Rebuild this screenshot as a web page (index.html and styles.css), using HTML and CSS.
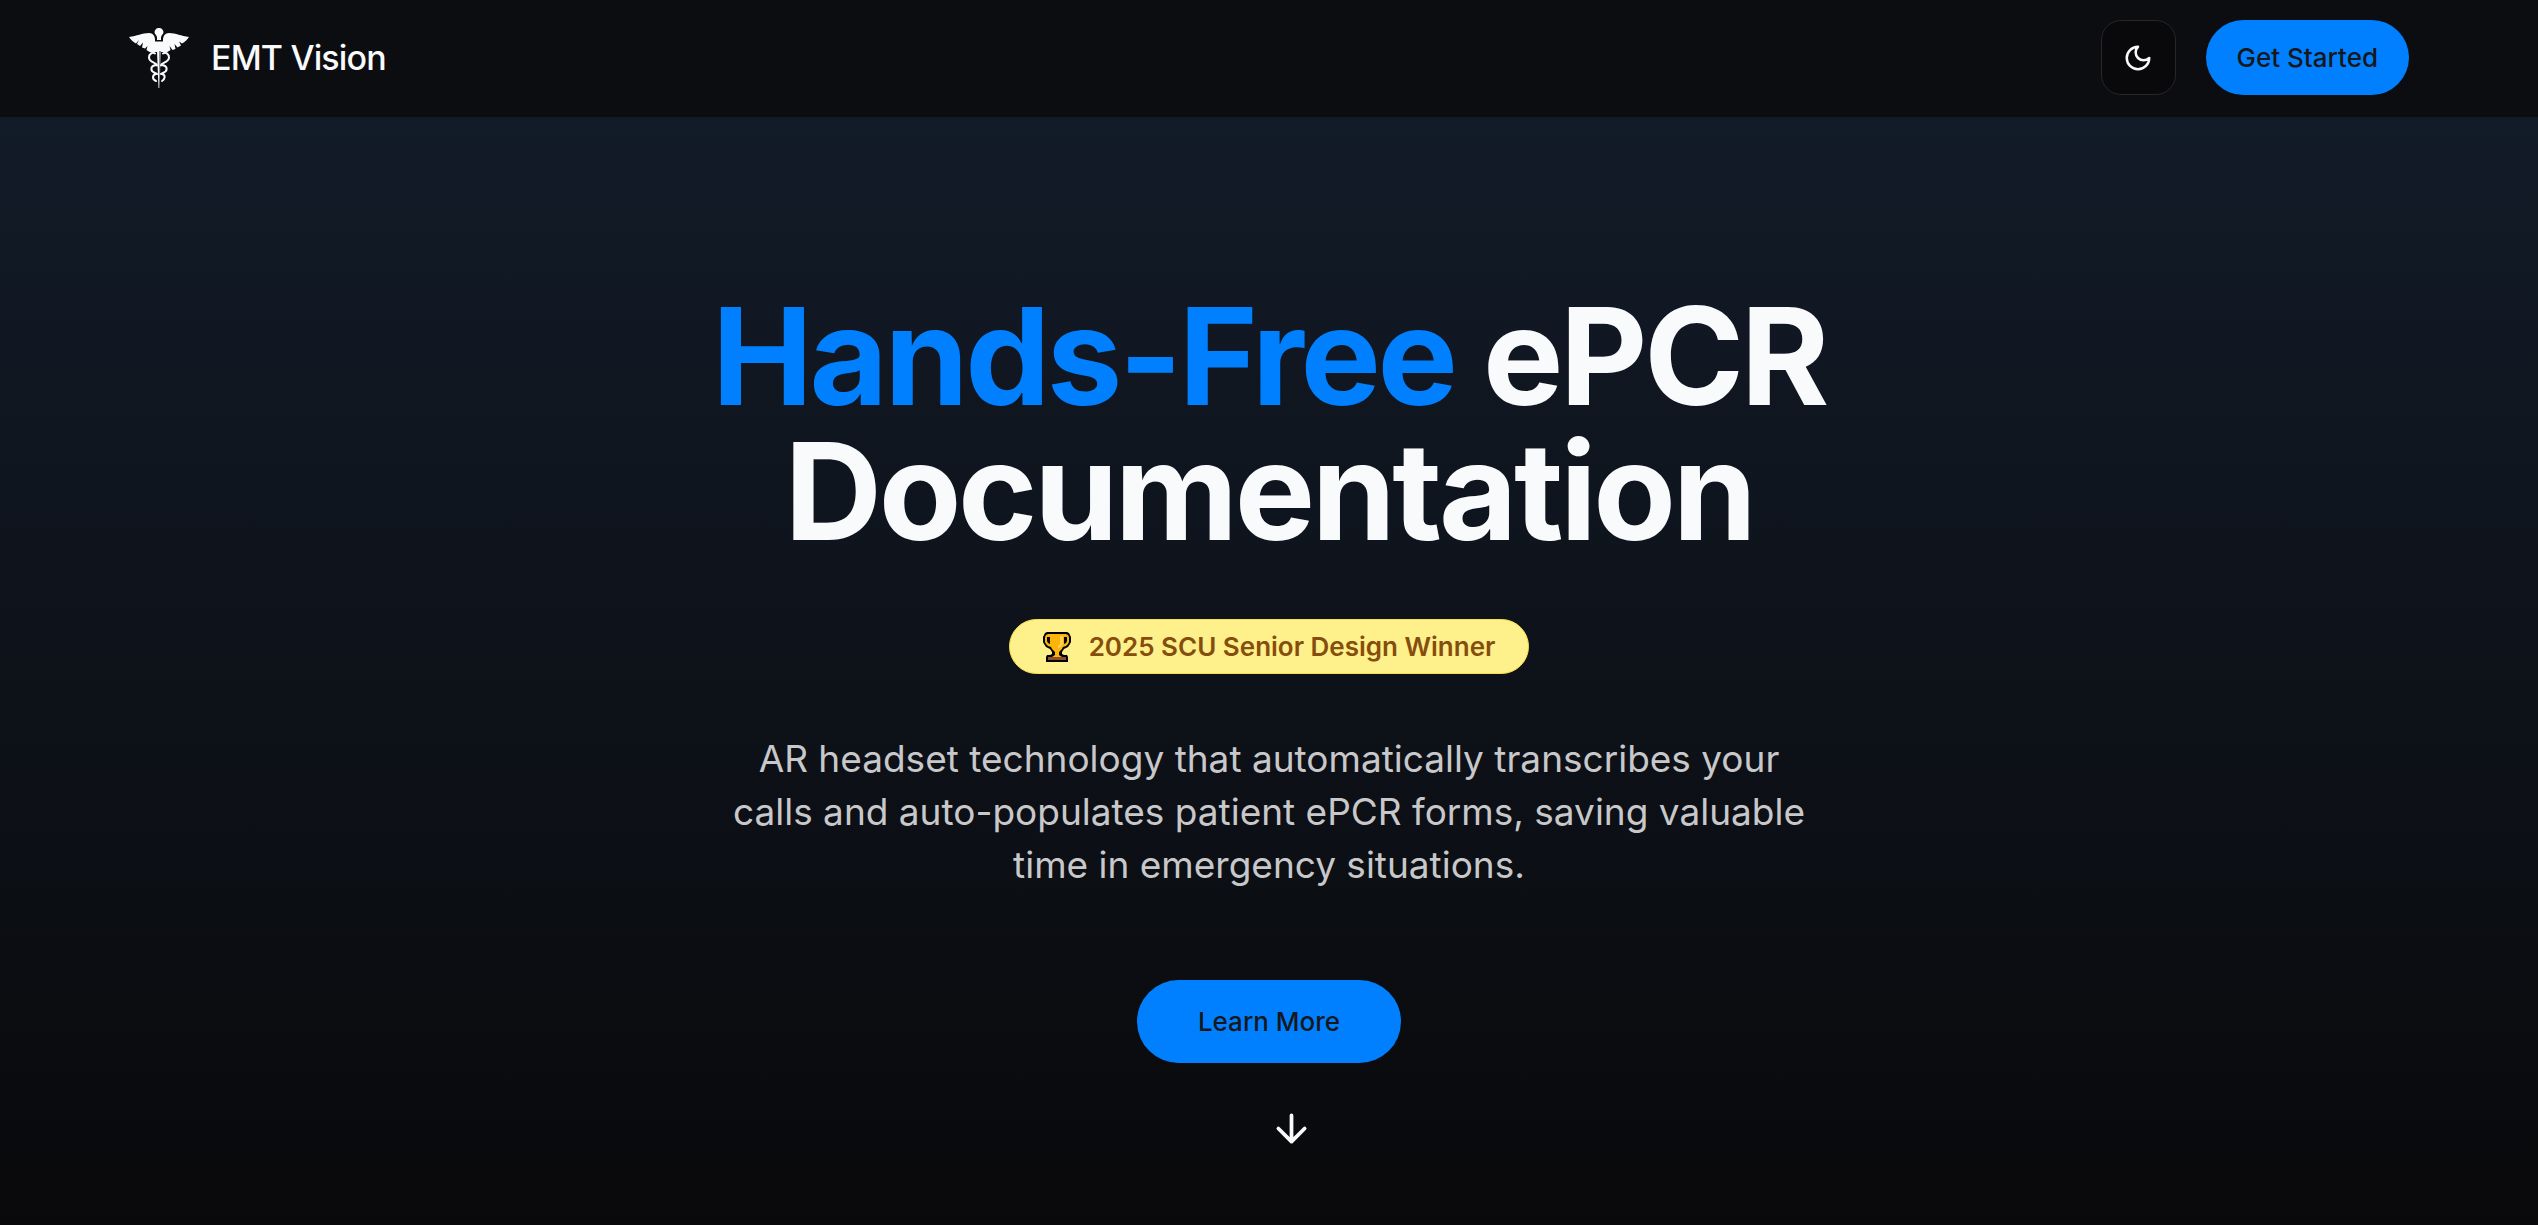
FILE: index.html
```html
<!DOCTYPE html>
<html lang="en">
<head>
  <meta charset="utf-8">
  <meta name="viewport" content="width=device-width, initial-scale=1">
  <title>EMT Vision</title>
  <link rel="stylesheet" href="styles.css">
</head>
<body>
  <header class="site-header">
    <a class="brand" href="#">
      <svg class="brand-logo" viewBox="0 0 60 60" aria-hidden="true">
        <g fill="currentColor">
          <path d="M30 0a4 4 0 0 1 3 7l-1 2v3h-4V9l-1-2a4 4 0 0 1 3-7z"/>
          <path d="M0 9C8 8 13 5 20 5c4 0 6 3 6 7v1.500h8V12c0-4 2-7 6-7 7 0 12 3 20 4-2 3-4 5-7 6.500l-3-2 2 4-3.500 2-3-3.500 1 5-3 1-3-4 1 4-3 2H20.500l-3-2 1-4L16 20.500l-3-1 1-5-3 3.500L8 16l2-4L7 15.500C4 14 2 12 0 9z"/>
          <path d="M28 23h2v37h-.500z"/>
        </g>
        <path d="M30 23h2L30.500 60H30z" fill="#8e8f92"/>
        <g fill="none" stroke="currentColor" stroke-width="2" stroke-linecap="round">
          <path d="M26 25.500c-3-2-6 1-6 4 0 5 8 5 8 8M34 25.500c3-2 6 1 6 4 0 5-8 5-8 8"/>
          <path d="M27 37c-6 1-6 6-1 8l2 1M33 37c6 1 6 6 1 8l-2 1"/>
          <path d="M27 46c-4 1-4 5 0 7M33 46c4 1 3 5 0 7"/>
        </g>
      </svg>
      <span>EMT Vision</span>
    </a>
    <div class="header-actions">
      <button class="theme-toggle" type="button" aria-label="Toggle theme">
        <svg class="moon" viewBox="0 0 24 24" aria-hidden="true"><path d="M12 3a6 6 0 0 0 9 9 9 9 0 1 1-9-9Z"/></svg>
      </button>
      <button class="button" type="button">Get Started</button>
    </div>
  </header>
  <main class="hero">
    <h1 class="hero-title"><span class="accent">Hands-Free</span> ePCR Documentation</h1>
    <p class="award">
      <svg class="trophy" viewBox="0 0 28 30" aria-hidden="true">
        <path fill="#000" d="M4 0h20l2 1 1 2 1 2v5l-1 2-2 3-4 2-2 3v2l2 1h3l1 2v5H3v-5l1-2h3l2-1v-2l-2-3-4-2-2-3-1-2V5l1-2 1-2z"/>
        <path fill="#fdb409" d="M5 2h18l2 1 1 2v5l-1 2-2 2-3 1-1 2-3 3v3l3 2H9l3-2v-3l-3-3-1-2-3-1-2-2-1-2V5l1-2z"/>
        <path fill="#000" d="M4 5h3v7l-2-1-1-2zM21 5h3v4l-1 2-2 1z"/>
        <path fill="#ffd15c" d="M17 4h3v8l-2 3-3 1v-2l2-2z"/>
        <path fill="#8d4f2f" d="M5 25h18v3H5z"/>
      </svg>
      <span>2025 SCU Senior Design Winner</span>
    </p>
    <p class="lead">AR headset technology that automatically transcribes your calls and auto-populates patient ePCR forms, saving valuable time in emergency situations.</p>
    <button class="button button-large" type="button">Learn More</button>
    <svg class="scroll-arrow" viewBox="0 0 24 24" aria-hidden="true"><path d="M12 5v14M19 12l-7 7-7-7"/></svg>
  </main>
</body>
</html>
```
FILE: styles.css
```css
* {
  box-sizing: border-box;
}

body {
  display: flex;
  flex-direction: column;
  min-height: 100vh;
  margin: 0;
  background: #09090b;
  color: #f9fafc;
  font-family: Inter, "Liberation Sans", sans-serif;
}

.site-header {
  display: flex;
  align-items: center;
  justify-content: space-between;
  padding: 20px 129px 22px;
  border-bottom: 1px solid #15181c;
  background: #0b0d11;
}

.brand {
  display: flex;
  align-items: center;
  gap: 22px;
  color: inherit;
  font-size: 34px;
  font-weight: 500;
  line-height: 40px;
  letter-spacing: -0.025em;
  text-decoration: none;
}

.brand-logo {
  width: 60px;
  height: 60px;
}

.header-actions {
  display: flex;
  gap: 30px;
}

.theme-toggle {
  display: grid;
  place-items: center;
  width: 75px;
  height: 75px;
  padding: 0;
  border: 1px solid #27272a;
  border-radius: 20px;
  background: #09090b;
  color: inherit;
}

.moon,
.scroll-arrow {
  fill: none;
  stroke: currentColor;
  stroke-width: 2;
  stroke-linecap: round;
  stroke-linejoin: round;
}

.moon {
  width: 30px;
  height: 30px;
}

.button {
  height: 75px;
  padding: 0 31px;
  border: 0;
  border-radius: 42px;
  background: #0080ff;
  color: #18181b;
  font-family: inherit;
  font-size: 26px;
  font-weight: 500;
}

.button-large {
  height: 83px;
  padding: 0 61px;
}

.hero {
  position: relative;
  display: flex;
  flex: 1;
  flex-direction: column;
  align-items: center;
  padding: 171px 60px 0;
  background: linear-gradient(#121b28, #09090b);
  text-align: center;
}

.hero-title {
  max-width: 1200px;
  margin: 0;
  font-size: 135px;
  font-weight: 700;
  line-height: 135px;
  letter-spacing: -0.025em;
}

.accent {
  color: #0080ff;
}

.award {
  display: flex;
  align-items: center;
  gap: 18px;
  height: 55px;
  margin: 60px 0 58px;
  padding: 0 33px;
  border: 1px solid #fde047;
  border-radius: 28px;
  background: #fef08a;
  color: #854d0e;
  font-size: 26px;
  font-weight: 600;
}

.trophy {
  width: 28px;
  height: 30px;
}

.lead {
  max-width: 1100px;
  margin: 0 0 89px;
  color: #c8c8ca;
  font-size: 37px;
  line-height: 53px;
}

.scroll-arrow {
  position: absolute;
  bottom: 74px;
  left: 50%;
  width: 45px;
  height: 45px;
}
```
